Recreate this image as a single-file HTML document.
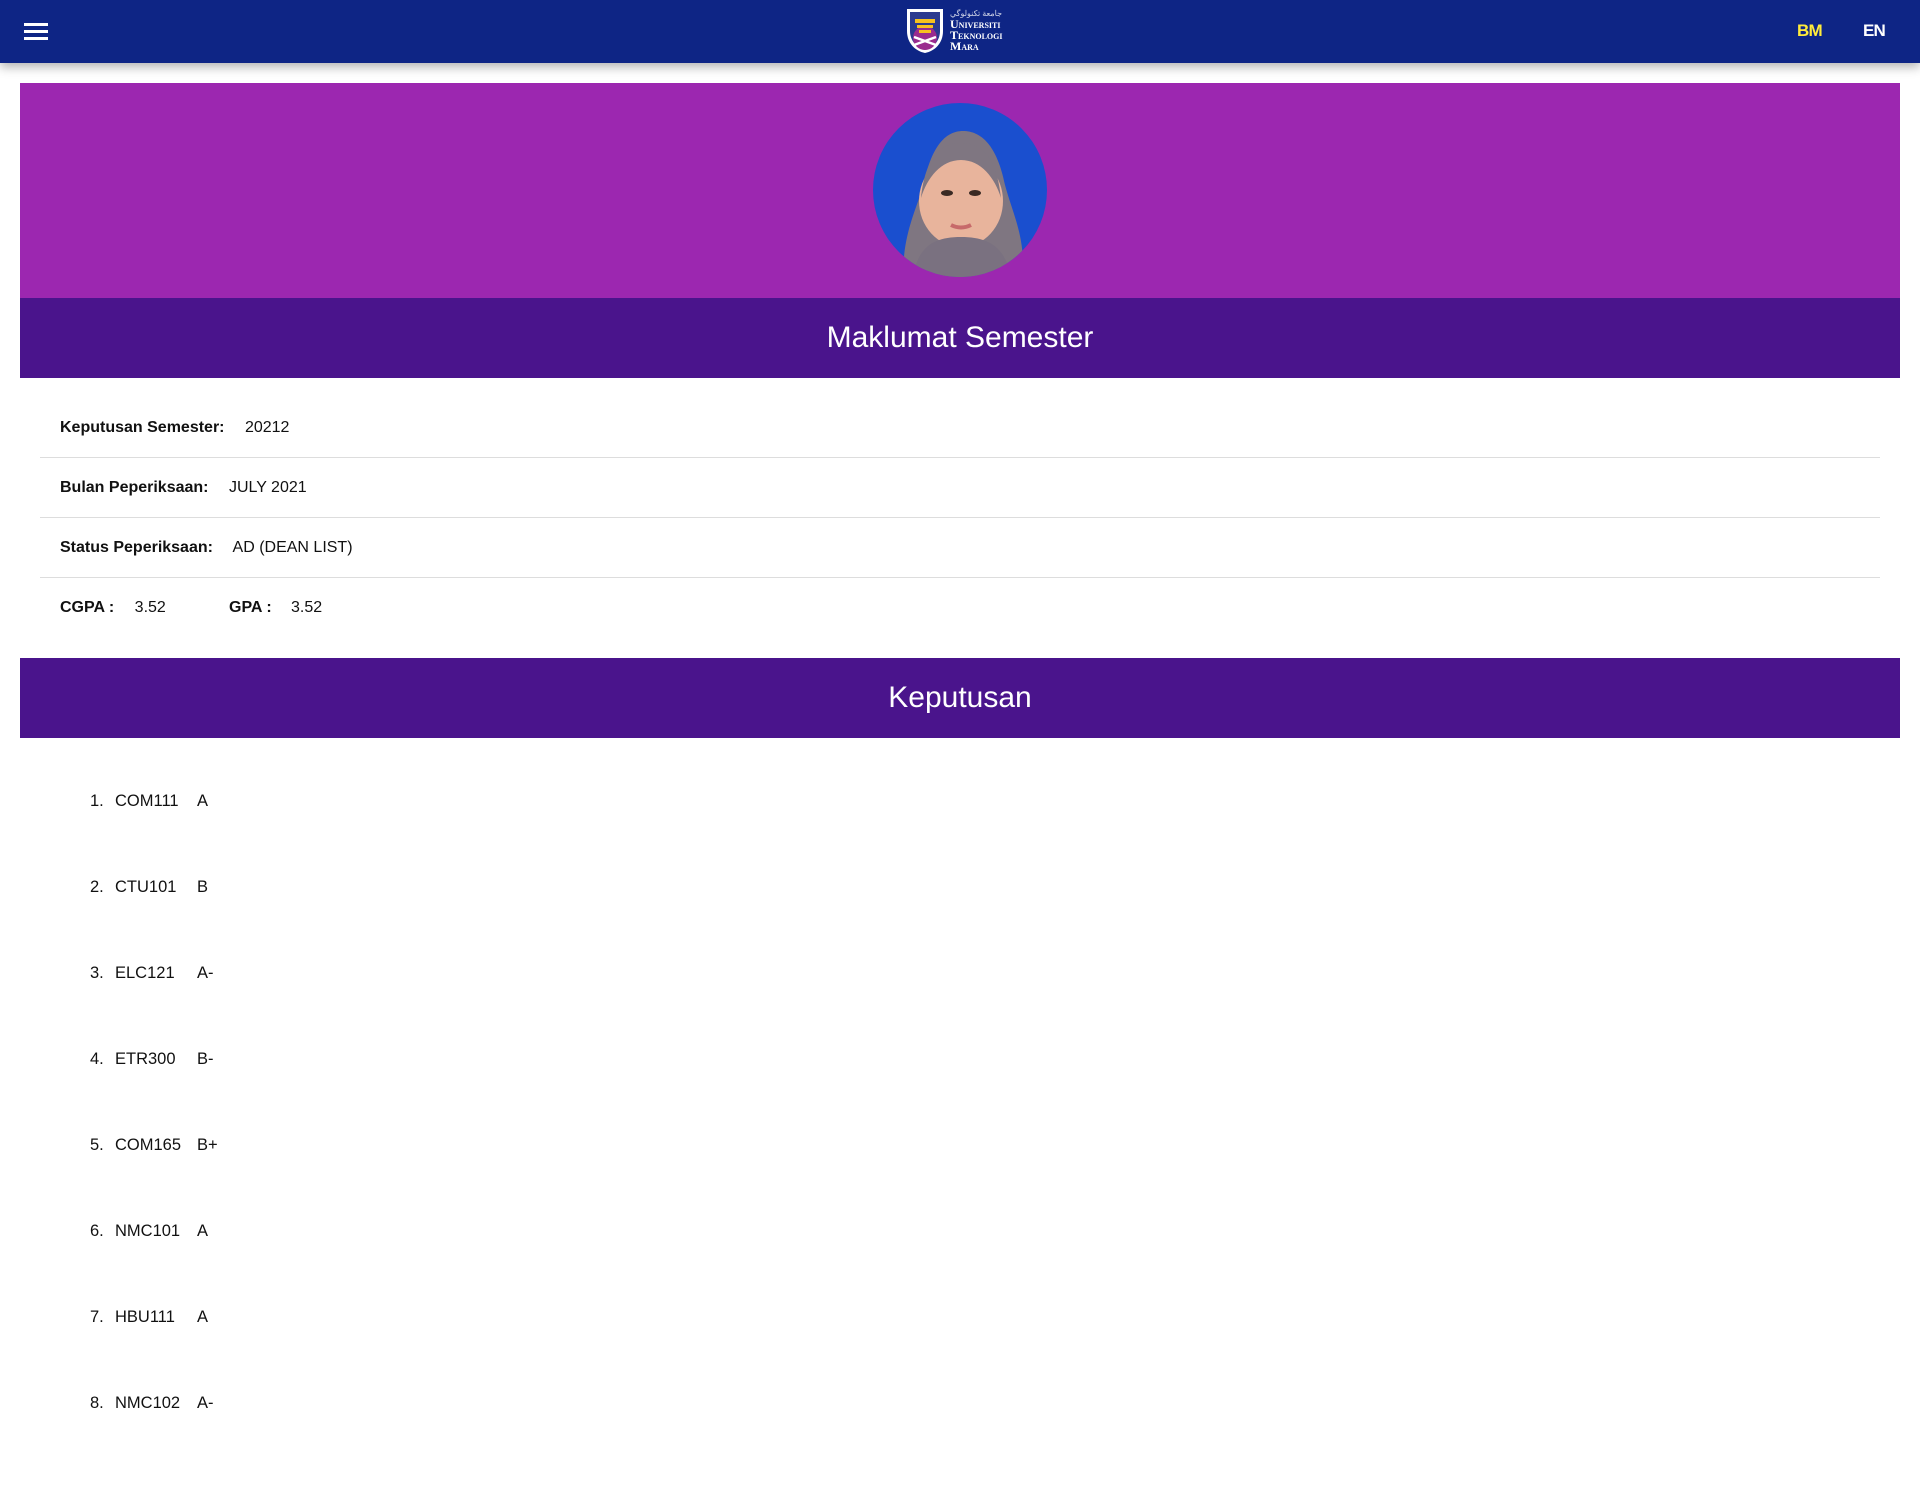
<!DOCTYPE html>
<html><head><meta charset="utf-8"><style>
*{margin:0;padding:0;box-sizing:border-box}
body{width:1920px;height:1506px;background:#fff;font-family:"Liberation Sans",sans-serif;color:#111;position:relative;overflow:hidden}
.hdr{position:absolute;left:0;top:0;width:1920px;height:63px;background:#0e2585;box-shadow:0 4px 10px rgba(0,0,0,.3)}
.hb{position:absolute;left:24px;width:24px;height:3px;background:#fff}
.lang{position:absolute;top:21px;font-weight:bold;font-size:17px;letter-spacing:-0.8px}
.banner{position:absolute;left:20px;top:83px;width:1880px;height:215px;background:#9c27b0}
.band{position:absolute;left:20px;width:1880px;height:80px;background:#4a148c;color:#fff;font-size:30px;text-align:center;line-height:80px}
.row{position:absolute;left:40px;width:1840px;height:60px;font-size:16px;line-height:60px;padding-left:20px}
.row.b{border-bottom:1px solid #ddd}
.row b{margin-right:16px}
.li{position:absolute;font-size:16.5px;line-height:20px}
</style></head><body>
<div class="hdr">
<div class="hb" style="top:23px"></div><div class="hb" style="top:30px"></div><div class="hb" style="top:37px"></div>
<svg style="position:absolute;left:905px;top:7px" width="40" height="48" viewBox="0 0 40 48">
<path d="M2 2h36v22c0 12-8 20-18 22C10 44 2 36 2 24z" fill="#fff"/>
<path d="M5 5h30v19c0 10-7 17-15 19C12 41 5 34 5 24z" fill="#2b3a8f"/>
<circle cx="20" cy="31" r="12" fill="#9a2c8e"/>
<rect x="10" y="12" width="20" height="4" fill="#f7c21e"/><rect x="12" y="18" width="16" height="3" fill="#f7c21e"/><rect x="14" y="23" width="12" height="3" fill="#f7c21e"/>
<path d="M9 30l22 8M31 30L9 38" stroke="#fff" stroke-width="2.5"/>
</svg>
<div style="position:absolute;left:950px;top:8px;color:#fff;font-family:'Liberation Serif',serif;font-size:12px;line-height:11px;font-variant:small-caps;font-weight:bold">
<div style="font-size:8px;opacity:.8;font-weight:normal">ﺟﺎﻣﻌﺔ ﺗﻜﻨﻮﻟﻮﮔﻲ</div><div>Universiti</div><div>Teknologi</div><div>Mara</div></div>
<div class="lang" style="left:1797px;color:#ffeb3b">BM</div>
<div class="lang" style="left:1863px;color:#fff">EN</div>
</div>
<div class="banner"></div>
<svg style="position:absolute;left:873px;top:103px" width="174" height="174" viewBox="0 0 174 174">
<defs><clipPath id="c"><circle cx="87" cy="87" r="87"/></clipPath></defs>
<g clip-path="url(#c)">
<rect width="174" height="174" fill="#1a4fcf"/>
<path d="M30 174c0-40 10-60 20-90 8-40 22-56 40-56s34 14 42 54c8 30 20 50 18 92z" fill="#7f7681"/>
<ellipse cx="88" cy="98" rx="42" ry="46" fill="#e8b49c"/>
<path d="M48 95c4-38 18-55 40-55s36 16 40 55c-6-20-20-38-40-38S54 75 48 95z" fill="#7f7681"/>
<path d="M40 174c5-30 20-40 48-40s44 10 50 40z" fill="#7a7180"/>
<ellipse cx="74" cy="90" rx="6" ry="3" fill="#3a2a24"/><ellipse cx="102" cy="90" rx="6" ry="3" fill="#3a2a24"/>
<path d="M78 122q10 5 20 0" stroke="#c76a6a" stroke-width="4" fill="none"/>
</g></svg>
<div class="band" style="top:298px">Maklumat Semester</div>
<div class="row b" style="top:398px"><b>Keputusan Semester:</b> 20212</div>
<div class="row b" style="top:458px"><b>Bulan Peperiksaan:</b> JULY 2021</div>
<div class="row b" style="top:518px"><b>Status Peperiksaan:</b> AD (DEAN LIST)</div>
<div class="row" style="top:578px"><b>CGPA :</b> 3.52<b style="position:absolute;left:189px">GPA : </b><span style="position:absolute;left:251px">3.52</span></div>
<div class="band" style="top:658px">Keputusan</div>
<div class="li" style="left:90px;top:791px">1.</div><div class="li" style="left:115px;top:791px">COM111</div><div class="li" style="left:197px;top:791px">A</div>
<div class="li" style="left:90px;top:877px">2.</div><div class="li" style="left:115px;top:877px">CTU101</div><div class="li" style="left:197px;top:877px">B</div>
<div class="li" style="left:90px;top:963px">3.</div><div class="li" style="left:115px;top:963px">ELC121</div><div class="li" style="left:197px;top:963px">A-</div>
<div class="li" style="left:90px;top:1049px">4.</div><div class="li" style="left:115px;top:1049px">ETR300</div><div class="li" style="left:197px;top:1049px">B-</div>
<div class="li" style="left:90px;top:1135px">5.</div><div class="li" style="left:115px;top:1135px">COM165</div><div class="li" style="left:197px;top:1135px">B+</div>
<div class="li" style="left:90px;top:1221px">6.</div><div class="li" style="left:115px;top:1221px">NMC101</div><div class="li" style="left:197px;top:1221px">A</div>
<div class="li" style="left:90px;top:1307px">7.</div><div class="li" style="left:115px;top:1307px">HBU111</div><div class="li" style="left:197px;top:1307px">A</div>
<div class="li" style="left:90px;top:1393px">8.</div><div class="li" style="left:115px;top:1393px">NMC102</div><div class="li" style="left:197px;top:1393px">A-</div>
</body></html>
